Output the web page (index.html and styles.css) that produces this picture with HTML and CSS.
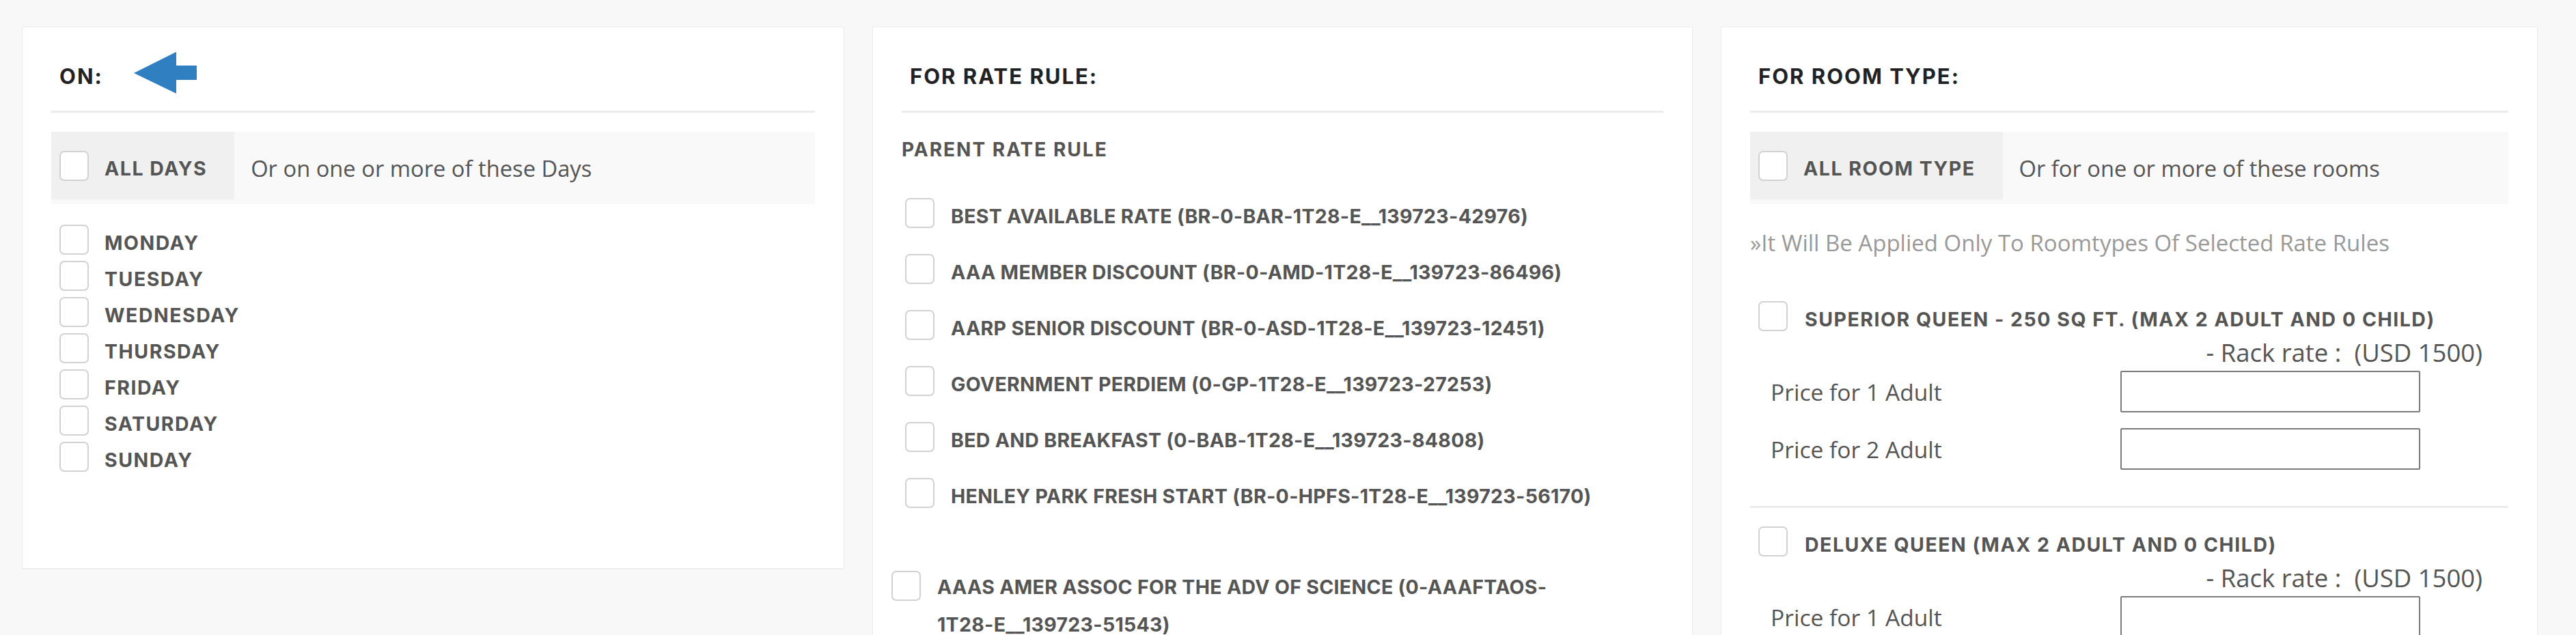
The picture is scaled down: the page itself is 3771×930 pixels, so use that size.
FILE: index.html
```html
<!DOCTYPE html>
<html>
<head>
<meta charset="utf-8">
<title>Rate rules</title>
<link rel="stylesheet" href="styles.css">
</head>
<body>

<div class="page">

	<!-- days -->
	<div class="panel">
		<div class="panel-head">
			<span class="head-title">ON:</span>
			<svg class="arrow" width="92" height="61" viewBox="0 0 92 61"><polygon points="0,31 62,0 62,20 92,20 92,41 62,41 62,61" fill="#2f7fc1"/></svg>
		</div>
		<div class="all-row">
			<label class="all-box"><input type="checkbox" class="chk"><span class="lbl">ALL DAYS</span></label>
			<span class="all-note">Or on one or more of these Days</span>
		</div>
		<ul class="day-list">
			<li><input type="checkbox" class="chk"><span class="lbl">MONDAY</span></li>
			<li><input type="checkbox" class="chk"><span class="lbl">TUESDAY</span></li>
			<li><input type="checkbox" class="chk"><span class="lbl">WEDNESDAY</span></li>
			<li><input type="checkbox" class="chk"><span class="lbl">THURSDAY</span></li>
			<li><input type="checkbox" class="chk"><span class="lbl">FRIDAY</span></li>
			<li><input type="checkbox" class="chk"><span class="lbl">SATURDAY</span></li>
			<li><input type="checkbox" class="chk"><span class="lbl">SUNDAY</span></li>
		</ul>
	</div>

	<!-- rate rules -->
	<div class="panel">
		<div class="panel-head">
			<span class="head-title">FOR RATE RULE:</span>
		</div>
		<div class="sub-title">PARENT RATE RULE</div>
		<ul class="rule-list">
			<li><input type="checkbox" class="chk"><span class="lbl">BEST AVAILABLE RATE (BR-0-BAR-1T28-E__139723-42976)</span></li>
			<li><input type="checkbox" class="chk"><span class="lbl">AAA MEMBER DISCOUNT (BR-0-AMD-1T28-E__139723-86496)</span></li>
			<li><input type="checkbox" class="chk"><span class="lbl">AARP SENIOR DISCOUNT (BR-0-ASD-1T28-E__139723-12451)</span></li>
			<li><input type="checkbox" class="chk"><span class="lbl">GOVERNMENT PERDIEM (0-GP-1T28-E__139723-27253)</span></li>
			<li><input type="checkbox" class="chk"><span class="lbl">BED AND BREAKFAST (0-BAB-1T28-E__139723-84808)</span></li>
			<li><input type="checkbox" class="chk"><span class="lbl">HENLEY PARK FRESH START (BR-0-HPFS-1T28-E__139723-56170)</span></li>
		</ul>
		<ul class="rule-list rule-other">
			<li><input type="checkbox" class="chk"><span class="lbl">AAAS AMER ASSOC FOR THE ADV OF SCIENCE (0-AAAFTAOS-1T28-E__139723-51543)</span></li>
		</ul>
	</div>

	<!-- room types -->
	<div class="panel">
		<div class="panel-head">
			<span class="head-title">FOR ROOM TYPE:</span>
		</div>
		<div class="all-row">
			<label class="all-box"><input type="checkbox" class="chk"><span class="lbl">ALL ROOM TYPE</span></label>
			<span class="all-note">Or for one or more of these rooms</span>
		</div>
		<p class="apply-note">&raquo;It Will Be Applied Only To Roomtypes Of Selected Rate Rules</p>

		<div class="room">
			<div class="room-head"><input type="checkbox" class="chk"><span class="lbl">SUPERIOR QUEEN - 250 SQ FT. (MAX 2 ADULT AND 0 CHILD)</span></div>
			<div class="rack">- Rack rate :&nbsp; (USD 1500)</div>
			<div class="price-row"><span>Price for 1 Adult</span><input type="text" class="price"></div>
			<div class="price-row"><span>Price for 2 Adult</span><input type="text" class="price"></div>
		</div>

		<div class="room">
			<div class="room-head"><input type="checkbox" class="chk"><span class="lbl">DELUXE QUEEN (MAX 2 ADULT AND 0 CHILD)</span></div>
			<div class="rack">- Rack rate :&nbsp; (USD 1500)</div>
			<div class="price-row"><span>Price for 1 Adult</span><input type="text" class="price"></div>
			<div class="price-row"><span>Price for 2 Adult</span><input type="text" class="price"></div>
		</div>
	</div>

</div>

</body>
</html>
```

FILE: styles.css
```css
html, body {
margin: 0;
padding: 0;
}
body {
background: #f8f8f8;
font-family: "Open Sans", Arial, sans-serif;
color: #555;
overflow: hidden;
}
ul {
list-style: none;
margin: 0;
padding: 0;
}

.page {
display: grid;
grid-template-columns: 1204px 1201px 1196px;
column-gap: 41px;
align-items: start;
padding: 39px 0 0 32px;
}

.panel {
background: #fff;
border: 1px solid #ececec;
box-shadow: 0 1px 1px rgba(0,0,0,0.03);
padding: 0 42px;
min-height: 794px;
box-sizing: border-box;
}

.panel-head {
display: flex;
align-items: center;
height: 125px;
padding: 20px 12px 0;
box-sizing: border-box;
border-bottom: 3px solid #ececec;
}
.head-title {
font-family: "Inter", "Liberation Sans", sans-serif;
font-weight: 700;
font-size: 31px;
letter-spacing: 2px;
color: #222;
}
.arrow {
margin-left: 45px;
margin-bottom: 10px;
}

/* checkbox + bold caps labels */
.chk {
-webkit-appearance: none;
appearance: none;
flex: none;
width: 43px;
height: 44px;
margin: 0;
border: 2px solid #d2d2d2;
border-radius: 7px;
background: #fff;
box-sizing: border-box;
}
.lbl {
font-family: "Inter", "Liberation Sans", sans-serif;
font-weight: 700;
font-size: 28.5px;
line-height: 34px;
letter-spacing: 1.5px;
color: #555;
margin-left: 23px;
padding-top: 9px;
}

.all-row {
display: flex;
align-items: center;
height: 106px;
margin-top: 28px;
background: #f9f9f9;
}
.all-box {
display: flex;
align-items: center;
align-self: flex-start;
height: 99px;
padding: 0 40px 0 12px;
background: #f0f0f0;
}
.all-note {
margin-left: 24px;
font-size: 32.7px;
color: #555;
}

.day-list {
margin-top: 30px;
}
.day-list li {
display: flex;
align-items: center;
margin: 0 0 9px 12px;
}

/* rate rules */
.sub-title {
margin-top: 34px;
line-height: 40px;
font-family: "Inter", "Liberation Sans", sans-serif;
font-weight: 700;
font-size: 28px;
letter-spacing: 2px;
color: #555;
}
.rule-list {
margin-top: 51px;
}
.rule-list li {
display: flex;
align-items: center;
margin: 0 0 38px 5px;
}
.rule-list .lbl {
margin-left: 24px;
letter-spacing: 0.3px;
}
.rule-other {
margin-top: 88px;
margin-left: -20px;
}
.rule-other li {
align-items: flex-start;
}
.rule-other .chk {
margin-top: 4px;
}
.rule-other .lbl {
max-width: 950px;
line-height: 55px;
padding-top: 0;
}

/* room types */
.apply-note {
margin: 33px 0 0;
line-height: 48px;
font-size: 33px;
color: #999;
}
.room {
padding: 27px 0 53px;
border-bottom: 3px solid #ececec;
}
.apply-note + .room {
margin-top: 34px;
}
.room-head {
display: flex;
align-items: center;
padding-left: 12px;
}
.room-head .lbl {
margin-left: 25px;
}
.rack {
margin-top: 11px;
padding-right: 38px;
line-height: 40px;
text-align: right;
font-size: 36.5px;
color: #555;
}
.price-row {
display: grid;
grid-template-columns: 512px 439px;
align-items: center;
padding-left: 30px;
margin-top: 23px;
font-size: 33.6px;
color: #555;
}
.rack + .price-row {
margin-top: 7px;
}
.price {
height: 61px;
margin: 0;
border: 2px solid #7a7a7a;
border-radius: 2px;
box-sizing: border-box;
background: #fff;
}
```
